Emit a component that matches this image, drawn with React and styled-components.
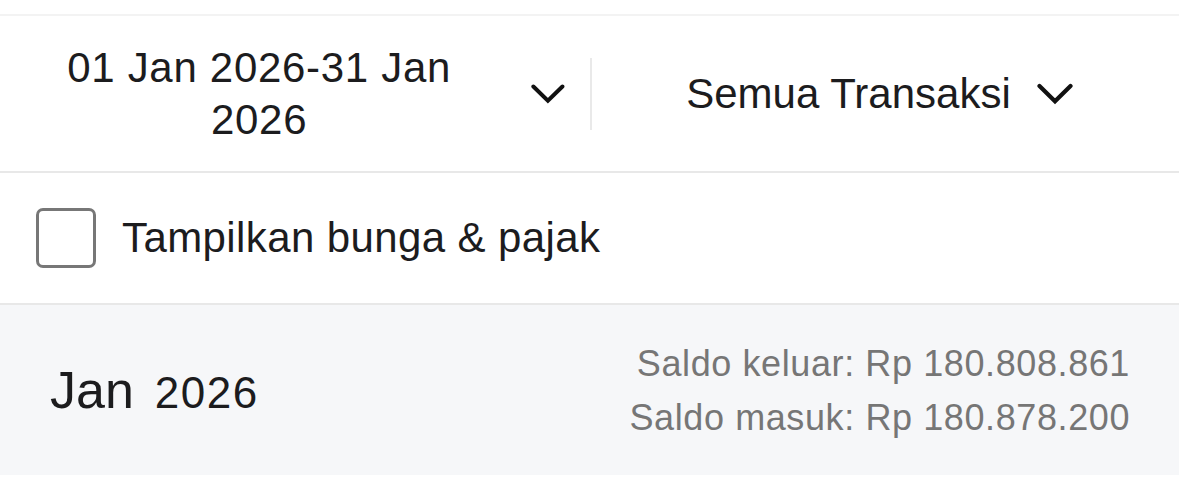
import React from "react";
import styled, { createGlobalStyle } from "styled-components";

const GlobalStyle = createGlobalStyle`
  html, body {
    margin: 0;
    padding: 0;
    background: #ffffff;
  }
  body {
    font-family: "Liberation Sans", Arial, sans-serif;
    color: #1c1c1e;
    -webkit-font-smoothing: antialiased;
  }
  * { box-sizing: border-box; }
`;

const Page = styled.div`
  width: 1179px;
  padding-top: 14px;
  background: #ffffff;
`;

const FilterBar = styled.div`
  display: flex;
  align-items: stretch;
  height: 159px;
  border-top: 2px solid #f3f3f3;
  border-bottom: 2px solid #e8e8e8;
`;

const FilterCell = styled.button`
  display: flex;
  align-items: center;
  justify-content: ${(p) => (p.$centered ? "center" : "flex-start")};
  gap: ${(p) => (p.$centered ? "26px" : "41px")};
  flex: ${(p) => (p.$fixed ? "0 0 590px" : "1 1 auto")};
  padding: ${(p) => (p.$centered ? "0 12px 0 0" : "0 25px 0 28px")};
  margin: 0;
  border: none;
  background: transparent;
  font: inherit;
  color: inherit;
  cursor: pointer;
`;

const FilterLabel = styled.span`
  flex: ${(p) => (p.$grow ? "1 1 auto" : "0 0 auto")};
  font-size: 42px;
  line-height: 52px;
  letter-spacing: ${(p) => (p.$grow ? "0.7px" : "0")};
  text-align: center;
  color: #1c1c1e;
  white-space: ${(p) => (p.$grow ? "normal" : "nowrap")};
`;

const Divider = styled.div`
  align-self: center;
  flex: 0 0 2px;
  height: 72px;
  background: #e9e9e9;
`;

const OptionRow = styled.label`
  display: flex;
  align-items: center;
  gap: 26px;
  height: 132px;
  padding: 0 0 0 36px;
  border-bottom: 2px solid #e8e8e8;
  cursor: pointer;
`;

const CheckBox = styled.span`
  flex: 0 0 60px;
  width: 60px;
  height: 60px;
  border: 3px solid #777777;
  border-radius: 7px;
  background: #ffffff;
`;

const OptionText = styled.span`
  font-size: 42px;
  letter-spacing: 0.4px;
  color: #1c1c1e;
`;

const MonthHeader = styled.div`
  display: flex;
  align-items: center;
  justify-content: space-between;
  height: 170px;
  padding: 0 49px 0 50px;
  background: #f6f7f9;
`;

const MonthTitle = styled.div`
  display: flex;
  align-items: baseline;
  gap: 21px;
`;

const MonthName = styled.span`
  font-size: 52px;
  color: #1c1c1e;
`;

const MonthYear = styled.span`
  font-size: 44px;
  letter-spacing: 1.5px;
  color: #1c1c1e;
`;

const Totals = styled.div`
  display: flex;
  flex-direction: column;
  align-items: flex-end;
  padding-top: 2px;
`;

const TotalLine = styled.span`
  font-size: 36px;
  line-height: 54px;
  letter-spacing: 0.6px;
  color: #767676;
`;

const Chevron = () => (
  <svg width="36" height="22" viewBox="0 0 36 22" fill="none" aria-hidden="true">
    <polyline
      points="2.5,3 18,18.2 33.5,3"
      stroke="#111111"
      strokeWidth="4.2"
      strokeLinecap="round"
      strokeLinejoin="miter"
    />
  </svg>
);

export default function App() {
  return (
    <>
      <GlobalStyle />
      <Page>
        <FilterBar>
          <FilterCell $fixed>
            <FilterLabel $grow>01 Jan 2026-31 Jan 2026</FilterLabel>
            <Chevron />
          </FilterCell>
          <Divider />
          <FilterCell $centered>
            <FilterLabel>Semua Transaksi</FilterLabel>
            <Chevron />
          </FilterCell>
        </FilterBar>
        <OptionRow>
          <CheckBox />
          <OptionText>Tampilkan bunga &amp; pajak</OptionText>
        </OptionRow>
        <MonthHeader>
          <MonthTitle>
            <MonthName>Jan</MonthName>
            <MonthYear>2026</MonthYear>
          </MonthTitle>
          <Totals>
            <TotalLine>Saldo keluar: Rp 180.808.861</TotalLine>
            <TotalLine>Saldo masuk: Rp 180.878.200</TotalLine>
          </Totals>
        </MonthHeader>
      </Page>
    </>
  );
}
